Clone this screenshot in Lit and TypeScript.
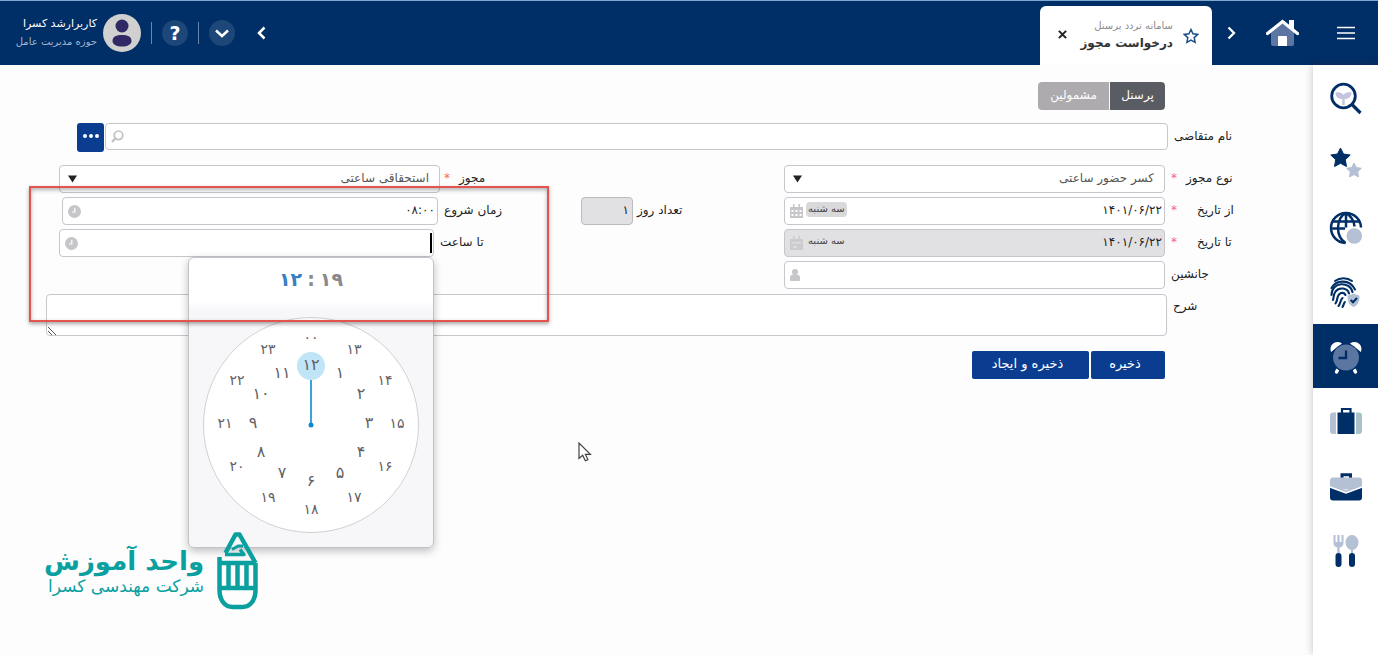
import { LitElement, html, css, svg, nothing } from "lit";
import { customElement, property, state } from "lit/decorators.js";
import { classMap } from "lit/directives/class-map.js";

const faDigits = (n: number | string) =>
  String(n).replace(/\d/g, (d) => "۰۱۲۳۴۵۶۷۸۹"[Number(d)]);

const NAVY = "#002e66";
const PALE = "#b4c0d3";

const sideIcons = [
  {
    name: "جستجو",
    art: svg`<circle cx="13.500" cy="13" r="11.800" fill="none" stroke="${NAVY}" stroke-width="2.800"/>
      <path d="M22 21.500l8.500 8.500" stroke="${NAVY}" stroke-width="3.200"/>
      <path d="M12.300 22v-6c-4.500 0-6.800-2.500-6.800-6.500 3.500-.8 6.500 0 8 2.300 1.500-2.300 4.500-3.100 8-2.300 0 4-2.300 6.500-6.800 6.500v6z" fill="#c3c5df"/>`,
  },
  {
    name: "علاقه‌مندی‌ها",
    art: svg`<path d="M10.500 1l3 6 6.700 1-4.900 4.700 1.200 6.800-6-3.200-6 3.200 1.200-6.800L.8 8l6.700-1z" fill="${NAVY}" stroke="${NAVY}" stroke-linejoin="round"/>
      <path d="M24 16l2.300 4.500 5 .8-3.600 3.500.8 5.100-4.500-2.400-4.500 2.400.8-5.100-3.600-3.500 5-.8z" fill="${PALE}" stroke="${PALE}" stroke-linejoin="round"/>`,
  },
  {
    name: "وب",
    art: svg`<g fill="none" stroke="${NAVY}" stroke-width="2.500">
      <path d="M31 15.500A15 15 0 1 0 15.500 31"/><path d="M15.500 31C5 24 6 6 16 1M16 1v14.500M16 1c5 3 8 8 8.500 13.500M3 9.500h26M1 16.500h14"/></g>
      <circle cx="24.300" cy="24" r="7.800" fill="${PALE}"/>`,
  },
  {
    name: "اثر انگشت",
    art: svg`<g fill="none" stroke="${NAVY}" stroke-width="2.100" stroke-linecap="round">
      <path d="M5 4C10 .4 17 .4 22 4"/><path d="M1.500 11C6 2.500 20 2 25 12.500"/>
      <path d="M1.500 18C1.500 4.500 20 4 22.500 15"/><path d="M3 23C4 20 3 18 5.500 14.500c4-5 12-3.500 13.500 2"/>
      <path d="M5.500 26.500C8 23 6.500 20 9 17.500c2.200-2.500 5.500-2 6.500 .5"/><path d="M8.500 29c2.500-3 1.500-6 4-8"/><path d="M12.500 30c1-1.500 1-3 2.300-5"/></g>
      <path d="M23.500 16.500l6 2.200c0 6-1.500 9.300-6 11.300-4.500-2-6-5.300-6-11.300z" fill="${PALE}"/>
      <path d="M20.700 23l2.300 2.300 4-4.300" fill="none" stroke="${NAVY}" stroke-width="2"/>`,
  },
  {
    name: "تردد",
    art: svg`<path d="M1 11C-1.500 3.500 6 -1.500 12 2.500zM31 11c2.500-7.500-5-12.500-11-8.500z" fill="#fff"/>
      <path d="M7.500 29l-1 2M24.500 29l1 2" stroke="#fff" stroke-width="3.400" stroke-linecap="round"/>
      <circle cx="16" cy="17" r="14" fill="${NAVY}"/><circle cx="16" cy="16.500" r="13" fill="#5b76a0"/><path d="M16 9.500v7.500H8.500" fill="none" stroke="${NAVY}" stroke-width="2.300"/>`,
  },
  {
    name: "سفر",
    art: svg`<path d="M6 6.500v21.500H3a3 3 0 0 1-3-3V9.500a3 3 0 0 1 3-3z" fill="${PALE}"/><path d="M26 6.500v21.500h3a3 3 0 0 0 3-3V9.500a3 3 0 0 0-3-3z" fill="#a9c2c9"/>
      <path d="M7.500 6.500h17V28h-17z" fill="${NAVY}"/><path d="M12 8V3h8.500v5" fill="none" stroke="${NAVY}" stroke-width="2.200"/>`,
  },
  {
    name: "اداری",
    art: svg`<path d="M12 8V3.800h8.500V8" fill="none" stroke="${NAVY}" stroke-width="3"/><rect y="6.500" width="32" height="12" rx="3" fill="${PALE}"/>
      <path d="M0 16.500l16 5.500 16-5.500v10a3 3 0 0 1-3 3H3a3 3 0 0 1-3-3z" fill="${NAVY}"/><path d="M0 12.500l16 7 16-7v3.300l-16 6.400-16-6.400z" fill="${PALE}"/><path d="M0 16l16 6 16-6" fill="none" stroke="#fff" stroke-width="1.500"/>`,
  },
  {
    name: "رستوران",
    art: svg`<path d="M3.500 0v8c0 3 2 4 3.800 4.500V19h2.400v-6.500c1.800-.5 3.800-1.500 3.800-4.500V0h-2v7H9.600V0H7.400v7H5.500V0z" fill="${PALE}"/>
      <ellipse cx="22" cy="7.500" rx="6.500" ry="7.500" fill="${PALE}"/><path d="M22 12v8" stroke="${PALE}" stroke-width="2"/>
      <rect x="5.500" y="18" width="6" height="14" rx="3" fill="${NAVY}"/><rect x="19" y="18" width="6" height="14" rx="3" fill="${NAVY}"/>`,
  },
];

const calendarIcon = html`<svg class="glyph" width="13" height="14" viewBox="0 0 13 14" aria-hidden="true">
  <path d="M0 3h13v11H0zM3 0h1.500v4H3zM8.500 0H10v4H8.500z" fill="#c6c5c7"/>
  <path d="M1.500 6h2v2h-2zm4 0h2v2h-2zm4 0h2v2h-2zm-8 4h2v2h-2zm4 0h2v2h-2zm4 0h2v2h-2z" fill="#fff"/></svg>`;
const calendarIconDim = html`<svg class="glyph" width="13" height="14" viewBox="0 0 13 14" aria-hidden="true">
  <path d="M0 3h13v11H0zM3 0h1.500v4H3zM8.500 0H10v4H8.500z" fill="#cccbcd"/>
  <path d="M1.500 6h10v1.500h-10zM3 10h4v2H3z" fill="#dddcde"/></svg>`;
const clockIcon = html`<svg class="glyph" width="13" height="13" viewBox="0 0 13 13" aria-hidden="true">
  <circle cx="6.500" cy="6.500" r="6.500" fill="#c6c5c7"/><path d="M6.800 3v4H4" fill="none" stroke="#fff" stroke-width="1.200"/></svg>`;
const personIcon = html`<svg class="glyph" width="10" height="12" viewBox="0 0 10 12" aria-hidden="true">
  <circle cx="5" cy="3" r="3" fill="#c6c5c7"/><path d="M0 8.500C0 6 2 5.500 5 5.500s5 .5 5 3V11a1 1 0 0 1-1 1H1a1 1 0 0 1-1-1z" fill="#c6c5c7"/></svg>`;
const lensIcon = html`<svg class="glyph" width="13" height="13" viewBox="0 0 13 13" aria-hidden="true">
  <circle cx="7.500" cy="5.300" r="4.300" fill="none" stroke="#c1c0c2" stroke-width="1.700"/><path d="M4.300 8.500L1 12" stroke="#c1c0c2" stroke-width="2.200"/></svg>`;

@customElement("side-nav")
class SideNav extends LitElement {
  @property({ type: Number }) active = 4;

  static styles = css`
    :host {
      display: flex;
      flex-direction: column;
      box-sizing: border-box;
      width: 65px;
      flex: none;
      padding-bottom: 73px;
      background: #fff;
      box-shadow: 0 0 8px rgba(60, 50, 70, 0.3);
    }
    .item {
      flex: 1;
      min-height: 48px;
      max-height: 80px;
      display: flex;
      align-items: center;
      justify-content: center;
      padding: 3px 0 0;
      border: 0;
      background: none;
    }
    .item.active {
      background: #002e66;
    }
    svg {
      display: block;
      overflow: visible;
    }
  `;

  render() {
    return sideIcons.map(
      (icon, i) => html`<button
        class=${classMap({ item: true, active: i === this.active })}
        aria-label=${icon.name}
        @click=${() => (this.active = i)}
      >
        <svg width="32" height="32" viewBox="0 0 32 32">${icon.art}</svg>
      </button>`
    );
  }
}

@customElement("top-bar")
class TopBar extends LitElement {
  static styles = css`
    :host {
      display: flex;
      align-items: stretch;
      height: 65px;
      box-sizing: border-box;
      color: #fff;
      background: #002e66;
      border-top: 1px solid #7fa9cf;
    }
    button {
      font: inherit;
      color: inherit;
      background: none;
      border: 0;
      padding: 0;
      display: flex;
      align-items: center;
      justify-content: center;
    }
    svg {
      display: block;
    }
    .menu {
      width: 65px;
    }
    .home {
      width: 62px;
    }
    .next {
      width: 39px;
    }
    .tab {
      display: flex;
      align-items: center;
      box-sizing: border-box;
      width: 172px;
      margin-top: 5px;
      padding: 0 13px 0 18px;
      background: #fff;
      color: #333;
      border-radius: 6px 6px 0 0;
    }
    .titles {
      flex: 1;
      padding-right: 10px;
      white-space: nowrap;
    }
    .system {
      font-size: 10px;
      line-height: 15px;
      color: #8b8b8b;
    }
    .page {
      font-size: 12px;
      line-height: 21px;
      font-weight: bold;
    }
    .close {
      padding: 0 0 2px;
    }
    .account {
      display: flex;
      align-items: center;
      margin-right: auto;
      padding-left: 16px;
    }
    .round {
      width: 26px;
      height: 26px;
      border-radius: 50%;
      background: #1d4679;
      font-weight: bold;
      font-size: 19px;
    }
    .prev {
      width: 20px;
      margin-left: 16px;
    }
    .rule {
      width: 1px;
      height: 22px;
      margin: 0 10px;
      background: #6885a9;
    }
    .who {
      width: 81px;
      text-align: right;
      margin-right: 6px;
      white-space: nowrap;
    }
    .user {
      font-size: 11px;
      line-height: 18px;
    }
    .unit {
      font-size: 10px;
      line-height: 18px;
      color: #a3b6cf;
    }
  `;

  render() {
    return html`
      <button class="menu" aria-label="منو">
        <svg width="18" height="14" viewBox="0 0 18 14"><path d="M0 1.500h18M0 7h18M0 12.500h18" stroke="#fff" stroke-width="1.700"/></svg>
      </button>
      <button class="home" aria-label="خانه">
        <svg width="33" height="28" viewBox="0 0 33 28">
          <path d="M5 12L16.500 3 28 12v13a2 2 0 0 1-2 2H7a2 2 0 0 1-2-2z" fill="#5b76a0"/>
          <path d="M12 27v-9a1 1 0 0 1 1-1h7a1 1 0 0 1 1 1v9z" fill="#fff"/>
          <path d="M23 1h5v10l-5-4z" fill="#fff"/>
          <path d="M1.500 14.500L16.500 2.500l15 12" fill="none" stroke="#fff" stroke-width="3.200" stroke-linecap="round"/>
        </svg>
      </button>
      <button class="next" aria-label="زبانه بعدی">
        <svg width="9" height="14" viewBox="0 0 9 14"><path d="M1.500 1.500L7 7l-5.500 5.500" fill="none" stroke="#fff" stroke-width="2.300"/></svg>
      </button>
      <div class="tab">
        <svg width="16" height="16" viewBox="0 0 16 16"><path d="M8 1.500l2 4.300 4.700.6-3.500 3.200.9 4.700L8 12l-4.100 2.300.9-4.700L1.300 6.400 6 5.800z" fill="none" stroke="#1d4e8a" stroke-width="1.500"/></svg>
        <div class="titles">
          <div class="system">سامانه تردد پرسنل</div>
          <div class="page">درخواست مجوز</div>
        </div>
        <button class="close" aria-label="بستن">
          <svg width="9" height="9" viewBox="0 0 8 8"><path d="M.8.800l6.400 6.400M7.200.800L.8 7.200" stroke="#222" stroke-width="1.800"/></svg>
        </button>
      </div>
      <div class="account">
        <button class="prev" aria-label="زبانه قبلی">
          <svg width="9" height="14" viewBox="0 0 9 14"><path d="M7.500 1.500L2 7l5.500 5.500" fill="none" stroke="#fff" stroke-width="2.500"/></svg>
        </button>
        <button class="round" aria-label="بیشتر">
          <svg width="14" height="9" viewBox="0 0 14 9"><path d="M1 1.500l6 5.500 6-5.500" fill="none" stroke="#fff" stroke-width="2.500"/></svg>
        </button>
        <span class="rule"></span>
        <button class="round">?</button>
        <span class="rule"></span>
        <svg width="38" height="38" viewBox="0 0 38 38">
          <circle cx="19" cy="19" r="19" fill="#d0d0d0"/><circle cx="19" cy="12" r="6.500" fill="#302966"/>
          <path d="M9.500 27c0-4.500 4-6 9.500-6s9.500 1.500 9.500 6c0 3.500-4 5.500-9.500 5.500S9.500 30.500 9.500 27z" fill="#302966"/>
        </svg>
        <div class="who">
          <div class="user">کاربرارشد کسرا</div>
          <div class="unit">حوزه مدیریت عامل</div>
        </div>
      </div>
    `;
  }
}

@customElement("clock-picker")
class ClockPicker extends LitElement {
  @property({ type: Number }) hour = 12;
  @property({ type: Number }) minute = 19;

  static styles = css`
    :host {
      display: block;
      box-sizing: border-box;
      width: 246px;
      padding-bottom: 14px;
      border: 1px solid #c4c2c6;
      border-radius: 6px;
      background: linear-gradient(#fff 44px, #f7f6f8 52px);
      box-shadow: 0 3px 8px rgba(0, 0, 0, 0.25);
    }
    .readout {
      display: flex;
      direction: ltr;
      justify-content: center;
      gap: 5px;
      height: 42px;
      margin-bottom: 17px;
      align-items: center;
      font-size: 19px;
      font-weight: bold;
      color: #8a898c;
    }
    .hour {
      color: #3580c6;
    }
    .dial {
      position: relative;
      width: 216px;
      height: 216px;
      margin: 0 auto;
      box-sizing: border-box;
      border: 1px solid #d2d0d4;
      border-radius: 50%;
      background: #fff;
    }
    .hand {
      position: absolute;
      inset: 0;
    }
    .num {
      position: absolute;
      transform: translate(-50%, -50%);
      width: 28px;
      height: 28px;
      padding: 0 0 2px;
      border: 0;
      border-radius: 50%;
      background: none;
      font: inherit;
      font-size: 14px;
      line-height: 24px;
      color: #626164;
    }
    .num.inner {
      font-size: 16px;
    }
    .num.picked {
      background: #bfe5f6;
    }
  `;

  private number(value: number) {
    const inner = value >= 1 && value <= 12;
    const angle = ((value % 12) * Math.PI) / 6;
    const radius = inner ? 58 : 86;
    const x = Math.round(107 + radius * Math.sin(angle));
    const y = Math.round(106 - radius * Math.cos(angle));
    return html`<button
      class=${classMap({ num: true, inner, picked: value === this.hour })}
      style="left:${x}px;top:${y}px"
      @click=${() => (this.hour = value)}
    >${faDigits(value === 0 ? "00" : value)}</button>`;
  }

  render() {
    const angle = (this.hour % 12) * 30;
    return html`
      <div class="readout">
        <span class="hour">${faDigits(this.hour)}</span><span>:</span><span>${faDigits(this.minute)}</span>
      </div>
      <div class="dial">
        <svg class="hand" width="214" height="214" viewBox="0 0 214 214">
          <g transform="rotate(${angle} 107 107)">
            <path d="M107 107V62" stroke="#3ba3dc" stroke-width="2"/><circle cx="107" cy="107" r="2.500" fill="#0f87d0"/>
          </g>
        </svg>
        ${Array.from({ length: 24 }, (_, i) => this.number(i))}
      </div>
    `;
  }
}

@customElement("app-root")
class AppRoot extends LitElement {
  @state() private scope = "personnel";

  static styles = css`
    * {
      box-sizing: border-box;
    }
    :host {
      display: flex;
      flex-direction: column;
      position: relative;
      min-height: 100vh;
      direction: rtl;
      overflow: hidden;
      background: #fdfdfe;
      color: #222;
      font-family: "DejaVu Sans", sans-serif;
      font-size: 12px;
    }
    .body {
      flex: 1;
      display: flex;
    }
    main {
      flex: 1;
      min-width: 0;
      display: flex;
      flex-direction: column;
      gap: 4px;
      padding-top: 17px;
    }
    button,
    input,
    select,
    textarea {
      font: inherit;
      color: inherit;
      margin: 0;
    }
    button {
      border: 0;
      padding: 0;
      color: #fff;
    }
    .scope {
      display: flex;
      gap: 1px;
      margin: 0 148px 9px 0;
    }
    .scope button {
      height: 28px;
      width: 55px;
      padding-bottom: 3px;
      background: #5a5c63;
      border-radius: 0 4px 4px 0;
    }
    .scope button + button {
      width: 71px;
      background: #adabae;
      border-radius: 4px 0 0 4px;
    }
    .row {
      display: grid;
      grid-template-columns: 148px minmax(0, 1fr) 344px minmax(0, 1fr) 59px;
      min-height: 28px;
    }
    .wide {
      grid-template-columns: 146px minmax(0, 1fr) 46px;
    }
    .applicant {
      grid-template-columns: 145px minmax(0, 1fr) 29px 76px;
      margin-bottom: 9px;
    }
    label {
      display: flex;
      justify-content: flex-end;
      gap: 9px;
      padding-left: 6px;
      line-height: 26px;
      white-space: nowrap;
    }
    .spread {
      gap: 20px;
    }
    .star {
      color: #ef6a6a;
      width: 6px;
    }
    .middle {
      display: flex;
      align-items: flex-start;
    }
    .middle label {
      margin-right: auto;
      padding-left: 4px;
    }
    .middle .days-label {
      width: 151px;
      margin: 0;
    }
    .middle .near {
      padding-left: 0;
    }
    .box {
      display: flex;
      align-items: center;
      height: 28px;
      min-width: 0;
      position: relative;
      border: 1px solid #c9c5cd;
      border-radius: 4px;
      background: #fff;
      padding-left: 5px;
    }
    .box input {
      flex: 1;
      min-width: 0;
      height: 24px;
      border: 0;
      outline: 0;
      background: none;
      padding: 0 2px 2px;
    }
    .box.off,
    .days {
      background: #e1e0e2;
    }
    .days {
      width: 52px;
      height: 28px;
      border: 1px solid #bcbabf;
      border-radius: 4px;
      padding: 0 3px 3px;
    }
    .start {
      margin: 0 2px 0 3px;
    }
    .until {
      margin-right: 6px;
    }
    .applicant .box {
      height: 27px;
    }
    .more {
      display: flex;
      align-items: center;
      justify-content: center;
      width: 27px;
      height: 29px;
      margin-right: 1px;
      padding-bottom: 4px;
      border-radius: 3px;
      background: #0a3c8f;
    }
    .pick {
      padding: 0;
    }
    select {
      appearance: none;
      flex: 1;
      width: 100%;
      height: 26px;
      border: 0;
      background: none;
      padding: 0 10px 2px 24px;
      color: #555;
    }
    .arrow {
      position: absolute;
      left: 8px;
      top: 9px;
      pointer-events: none;
    }
    .glyph {
      display: block;
      flex: none;
    }
    .weekday {
      font-size: 10px;
      line-height: 14px;
      height: 15px;
      margin: 0 0 3px 3px;
      padding: 0 2px;
      border-radius: 4px;
      color: #444;
      background: #d9d8da;
    }
    .off .weekday {
      background: none;
    }
    .caret {
      width: 2px;
      height: 20px;
      margin-right: 1px;
      background: #000;
    }
    textarea {
      display: block;
      width: 100%;
      height: 42px;
      border: 1px solid #c9c5cd;
      border-radius: 4px;
      background: #fff;
      resize: none;
    }
    .note {
      position: relative;
      margin-top: 1px;
    }
    .grip {
      position: absolute;
      left: 2px;
      bottom: 1px;
    }
    .actions {
      display: flex;
      gap: 2px;
      margin: 11px 148px 0 0;
    }
    .actions button {
      width: 74px;
      height: 28px;
      padding: 0 6px 3px 0;
      font-size: 13px;
      background: #0a3c8f;
      border-radius: 2px;
    }
    .actions button + button {
      width: 117px;
    }
    clock-picker {
      position: absolute;
      top: 27px;
      right: -1px;
      z-index: 1;
    }
    .highlight {
      position: absolute;
      z-index: 2;
      left: 29px;
      top: 186px;
      width: 520px;
      height: 136px;
      border: 2px solid #e2544f;
      box-shadow: 0 2px 4px rgba(0, 0, 0, 0.35), inset 0 2px 4px rgba(0, 0, 0, 0.3);
      pointer-events: none;
    }
    .pointer {
      position: absolute;
      left: 578px;
      top: 442px;
    }
    .brand {
      position: absolute;
      z-index: 3;
      left: 44px;
      bottom: 45px;
      display: flex;
      align-items: center;
      gap: 13px;
      color: #0aa09f;
      white-space: nowrap;
    }
    .brand-name {
      font-size: 26px;
      line-height: 30px;
      font-weight: bold;
    }
    .brand-sub {
      font-size: 17px;
      line-height: 20px;
    }
  `;

  private picker(id: string, value: string) {
    return html`<div class="box pick">
      <select id=${id}><option>${value}</option></select>
      <svg class="arrow" width="9" height="8" viewBox="0 0 9 8"><path d="M0 .500h9L4.500 7.500z" fill="#222"/></svg>
    </div>`;
  }

  private label(target: string, text: string, required = false, look: "" | "spread" | "near" = "") {
    return html`<label for=${target} class=${look}
      ><span>${text}</span>${required ? html`<span class="star">*</span>` : nothing}</label
    >`;
  }

  render() {
    return html`
      <top-bar></top-bar>
      <div class="body">
        <side-nav></side-nav>
        <main>
          <div class="scope">
            <button @click=${() => (this.scope = "personnel")} aria-pressed=${this.scope === "personnel"}>پرسنل</button>
            <button @click=${() => (this.scope = "included")} aria-pressed=${this.scope === "included"}>مشمولین</button>
          </div>
          <div class="row applicant">
            ${this.label("applicant", "نام متقاضی")}
            <div class="box"><input id="applicant" />${lensIcon}</div>
            <button class="more" aria-label="انتخاب">
              <svg width="16" height="4" viewBox="0 0 16 4"><g fill="#fff"><circle cx="2" cy="2" r="2"/><circle cx="8" cy="2" r="2"/><circle cx="14" cy="2" r="2"/></g></svg>
            </button>
          </div>
          <div class="row">
            ${this.label("kind", "نوع مجوز", true)} ${this.picker("kind", "کسر حضور ساعتی")}
            <div class="middle">${this.label("permit", "مجوز", true)}</div>
            ${this.picker("permit", "استحقاقی ساعتی")}
          </div>
          <div class="row">
            ${this.label("from", "از تاریخ", true, "spread")}
            <div class="box"><input id="from" value="۱۴۰۱/۰۶/۲۲" /><span class="weekday">سه شنبه</span>${calendarIcon}</div>
            <div class="middle">
              <label class="days-label" for="days">تعداد روز</label><input class="days" id="days" value="۱" readonly />
              ${this.label("start", "زمان شروع")}
            </div>
            <div class="box start"><input id="start" value="۰۸:۰۰" />${clockIcon}</div>
          </div>
          <div class="row">
            ${this.label("to", "تا تاریخ", true, "spread")}
            <div class="box off"><input id="to" value="۱۴۰۱/۰۶/۲۲" readonly /><span class="weekday">سه شنبه</span>${calendarIconDim}</div>
            <div class="middle">${this.label("until", "تا ساعت", false, "near")}</div>
            <div class="box until">
              <span class="caret"></span><input id="until" />${clockIcon}
              <clock-picker></clock-picker>
            </div>
          </div>
          <div class="row">
            ${this.label("deputy", "جانشین")}
            <div class="box"><input id="deputy" />${personIcon}</div>
          </div>
          <div class="row wide">
            ${this.label("note", "شرح")}
            <div class="note">
              <textarea id="note"></textarea>
              <svg class="grip" width="9" height="9" viewBox="0 0 9 9"><path d="M0 1l8 8M0 5l4 4" stroke="#555"/></svg>
            </div>
          </div>
          <div class="actions"><button>ذخیره</button><button>ذخیره و ایجاد</button></div>
        </main>
      </div>
      <div class="highlight"></div>
      <svg class="pointer" width="14" height="20" viewBox="0 0 14 20"><path d="M1 1v15.500l3.700-3.300 2.600 5.600 2.600-1.200-2.500-5.300h5z" fill="#fff" stroke="#444" stroke-width="1.200"/></svg>
      <div class="brand">
        <svg width="41" height="78" viewBox="0 0 41 78">
          <g fill="none" stroke="#0aa09f" stroke-width="4.500">
            <path d="M2.500 25v33c0 11 6 17 13 17h10c7 0 13-6 13-17V31M2.500 31h36M2.500 56h36M11.500 31v25M20.500 31v25M29.500 31v25"/>
            <path d="M38.500 31L22.500 2.500h-4L8.500 21" stroke-linejoin="round"/>
            <path d="M8 22.500h19l-4-5" stroke-width="3.500" stroke-linejoin="round"/>
            <path d="M15 17.500l6-3.500h5" stroke-width="3" stroke-linejoin="round"/>
          </g>
        </svg>
        <div>
          <div class="brand-name">واحد آموزش</div>
          <div class="brand-sub">شرکت مهندسی کسرا</div>
        </div>
      </div>
    `;
  }
}
